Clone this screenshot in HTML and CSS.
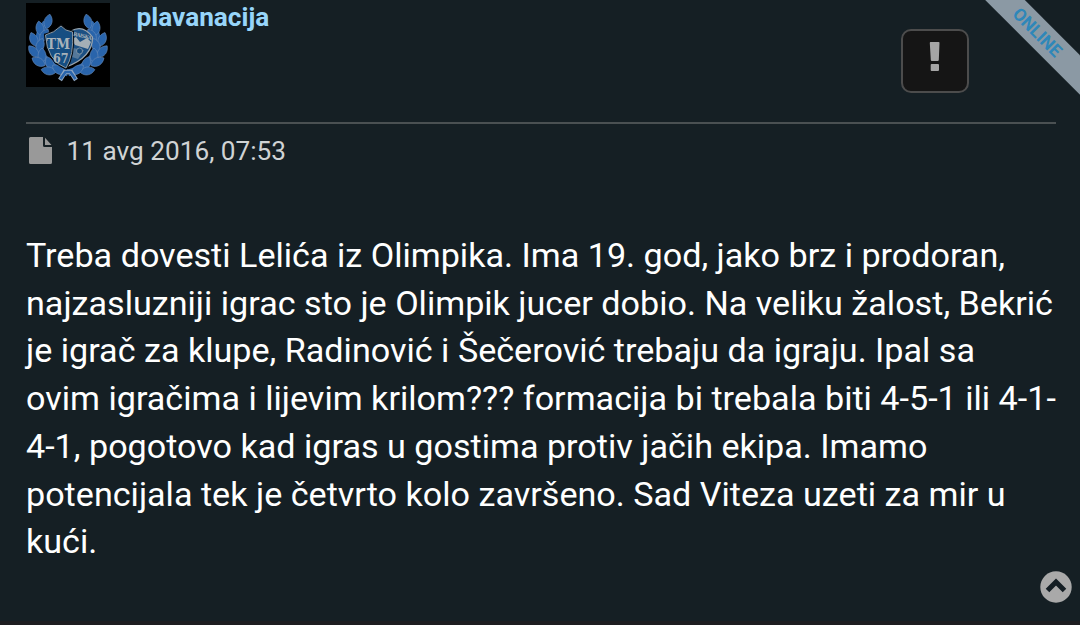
FILE: index.html
```
<!DOCTYPE html>
<html lang="bs">
<head>
    <meta charset="UTF-8">
    <meta name="viewport" content="width=device-width, initial-scale=1.0">
    <title>Forum</title>
    <link rel="stylesheet" href="styles.css">
</head>
<body>
    <div class="post">
        <div class="ribbon">ONLINE</div>
        <header class="post-header">
            <svg class="avatar" viewBox="0 0 84 84">
                <defs>
                    <path id="leaf" d="M0 7 C-5.500 3 -5 -4 0 -8 C5 -4 5.500 3 0 7Z"/>
                    <!-- one half of the wreath -->
                    <g id="branch" fill="#2964ab" stroke="#6489b8" stroke-width=".6">
                        <path d="M20 20 C8 33 8 60 42 70" fill="none" stroke="#2964ab" stroke-width="7"/>
                        <use href="#leaf" transform="translate(22 19) rotate(14)"/>
                        <use href="#leaf" transform="translate(14 26) rotate(-10)"/>
                        <use href="#leaf" transform="translate(18 33) rotate(30)"/>
                        <use href="#leaf" transform="translate(8 37) rotate(-22)"/>
                        <use href="#leaf" transform="translate(14 43) rotate(18)"/>
                        <use href="#leaf" transform="translate(8 49) rotate(-40)"/>
                        <use href="#leaf" transform="translate(16 53) rotate(0)"/>
                        <use href="#leaf" transform="translate(13 59) rotate(-60)"/>
                        <use href="#leaf" transform="translate(24 61) rotate(-24)"/>
                        <use href="#leaf" transform="translate(23 68) rotate(-80)"/>
                        <use href="#leaf" transform="translate(33 67) rotate(-55)"/>
                    </g>
                </defs>
                <rect width="84" height="84" fill="#000"/>
                <use href="#branch"/>
                <use href="#branch" transform="translate(84 0) scale(-1 1)"/>
                <path d="M34 77 L39 69 H45 L50 77" fill="none" stroke="#8fa6c0" stroke-width="4.500"/>
                <path d="M34.500 76 L39.500 69 H44.500 L49.500 76" fill="none" stroke="#2964ab" stroke-width="2.600"/>
                <path d="M45 28 Q57 21 66.500 34 Q67 54 40 64Z" fill="#1c5083" stroke="#9aa5ae" stroke-width="1.200"/>
                <path d="M46 36 L50 34 L54 39 L61 35 L65 39 L62 46 L49 42Z" fill="#a4afb6"/>
                <path d="M47 45 L58 47 L52 56 L46 54Z" fill="#54789a"/>
                <circle cx="53.500" cy="48" r="3" fill="#174c7d" stroke="#9aa5ae" stroke-width=".7"/>
                <path d="M19.500 32 Q28 30 35 23 Q39 28 46.500 29 Q48 52 40 65 Q21 58 19.500 32Z" fill="#164e82" stroke="#050a10" stroke-width="3"/>
                <path d="M19.500 32 Q28 30 35 23 Q39 28 46.500 29 Q48 52 40 65 Q21 58 19.500 32Z" fill="#164e82" stroke="#8b98a3" stroke-width="1"/>
                <g class="crest-text">
                    <text x="20.500" y="45.500" font-size="14" textLength="23.500" lengthAdjust="spacingAndGlyphs">TM</text>
                    <text x="27" y="59.500" font-size="13" textLength="15.500" lengthAdjust="spacingAndGlyphs">67</text>
                    <text x="47" y="32.500" font-size="5" textLength="19" transform="rotate(13 47 32)">RAISKA</text>
                </g>
            </svg>
            <a href="#" class="username">plavanacija</a>
            <button class="report" aria-label="Prijavi">
                <svg width="12" height="30" viewBox="0 0 12 30">
                    <path d="M1.500 0 H9.700 Q10.600 0 10.500 1 L9.800 18 Q9.700 19 8.800 19 H2.800 Q1.900 19 1.800 18 L.8 1 Q.8 0 1.500 0Z M2.600 22 H9 Q10 22 10 23 V28 Q10 29 9 29 H2.600 Q1.700 29 1.700 28 V23 Q1.700 22 2.600 22Z" fill="#a5a5a5"/>
                </svg>
            </button>
        </header>
        <div class="post-date">
            <svg width="24" height="28" viewBox="0 0 24 28">
                <path d="M1.500 0 H14 V8.500 Q14 10 15.500 10 H23 V25.500 Q23 27 21.500 27 H1.500 Q0 27 0 25.500 V1.500 Q0 0 1.500 0Z M16 .8 L22.500 8 H16Z" fill="#999"/>
            </svg>
            <span>11 avg 2016, 07:53</span>
        </div>
        <p class="post-text">
            Treba dovesti Lelića iz Olimpika. Ima 19. god, jako brz i prodoran,<br>
            najzasluzniji igrac sto je Olimpik jucer dobio. Na veliku žalost, Bekrić<br>
            je igrač za klupe, Radinović i Šečerović trebaju da igraju. Ipal sa<br>
            ovim igračima i lijevim krilom??? formacija bi trebala biti 4-5-1 ili 4-1-<br>
            4-1, pogotovo kad igras u gostima protiv jačih ekipa. Imamo<br>
            potencijala tek je četvrto kolo završeno. Sad Viteza uzeti za mir u<br>
            kući.
        </p>
    </div>
    <a href="#" class="to-top" aria-label="Vrh">
        <svg width="32" height="32" viewBox="0 0 32 32">
            <circle cx="16" cy="16" r="15.700" fill="#a9a9a9"/>
            <path d="M7.500 19.500 L16 11 L24.500 19.500" fill="none" stroke="#141e24" stroke-width="5"/>
        </svg>
    </a>
</body>
</html>
```

FILE: styles.css
```
* {
    box-sizing: border-box;
}

body {
    margin: 0;
    background-color: #1d1d20;
    font-family: Roboto, sans-serif;
    overflow: hidden;
}

.post {
    position: relative;
    height: 621px;
    padding: 3px 24px 0 26px;
    background-color: #151f24;
    overflow: hidden;
}

.post-header {
    display: flex;
    align-items: flex-start;
    height: 121px;
    padding-right: 87px;
    border-bottom: 2px solid #4a5052;
}

.avatar {
    width: 84px;
    height: 84px;
}

.crest-text {
    font-family: "DejaVu Serif", serif;
    font-weight: bold;
    fill: #a8b3ba;
}

.username {
    margin-left: 26.6px;
    color: #97d5fa;
    font-size: 26.2px;
    font-weight: bold;
    line-height: 29px;
    text-decoration: none;
}

.report {
    display: flex;
    justify-content: center;
    width: 68px;
    height: 64px;
    margin: 26px 0 0 auto;
    padding: 11px 0 0;
    background-color: #151515;
    border: 2px solid #4c4c4c;
    border-radius: 10px;
}

.ribbon {
    position: absolute;
    top: 18px;
    right: -57px;
    width: 200px;
    height: 28px;
    background-color: #8b99a4;
    color: #2e87b9;
    font-size: 17.5px;
    font-weight: bold;
    line-height: 29px;
    text-align: center;
    text-indent: 1px;
    transform: rotate(45deg);
}

.post-date {
    display: flex;
    align-items: center;
    gap: 13.6px;
    height: 54px;
    padding-left: 3px;
    color: #d0d3d4;
    font-size: 26.2px;
}

.post-text {
    margin: 54px 0 0;
    color: #fff;
    font-size: 34.13px;
    line-height: 47.7px;
    white-space: nowrap;
}

.to-top {
    position: fixed;
    right: 8px;
    bottom: 22px;
    width: 32px;
    height: 32px;
}
```
